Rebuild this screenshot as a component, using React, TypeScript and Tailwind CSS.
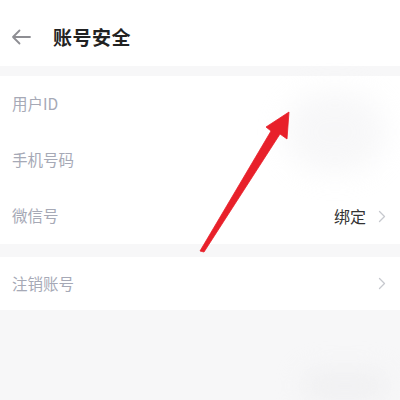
import React from "react";

const font = { fontFamily: '"Noto Sans CJK SC", "Noto Sans", sans-serif' };

function Chevron() {
  return (
    <svg width="8" height="13" viewBox="0 0 8 13" className="shrink-0">
      <path d="M1.5 1.5 L6.5 6.5 L1.5 11.5" fill="none" stroke="#c6c8ce" strokeWidth="1.3" strokeLinecap="round" strokeLinejoin="round" />
    </svg>
  );
}

export default function App() {
  return (
    <div className="relative w-[400px] h-[400px] overflow-hidden bg-[#f7f7f8]" style={font}>
      {/* header */}
      <div className="h-[66px] bg-white flex items-center pl-[10px] pt-[8px]">
        <svg width="22" height="18" viewBox="0 0 22 18">
          <path d="M20 9 H3 M9.5 2.5 L3 9 L9.5 15.5" fill="none" stroke="#8e8e93" strokeWidth="1.8" strokeLinecap="round" strokeLinejoin="round" />
        </svg>
        <span className="ml-[21px] text-[19px] font-bold text-[#222] tracking-[0.5px]">账号安全</span>
      </div>
      <div className="h-[10px]" />
      {/* section 1 */}
      <div className="bg-white">
        <div className="h-[56px] flex items-center pl-[12px] pr-[14px]">
          <span className="text-[15.5px] text-[#a6a9b6]">用户ID</span>
        </div>
        <div className="h-[56px] flex items-center pl-[12px] pr-[14px]">
          <span className="text-[15.5px] text-[#a6a9b6]">手机号码</span>
        </div>
        <div className="h-[56px] flex items-center pl-[12px] pr-[14px]">
          <span className="text-[15.5px] text-[#a6a9b6]">微信号</span>
          <span className="ml-auto text-[16px] text-[#333]">绑定</span>
          <span className="ml-[12px]"><Chevron /></span>
        </div>
      </div>
      <div className="h-[13px]" />
      <div className="bg-white">
        <div className="h-[53px] flex items-center pl-[12px] pr-[14px]">
          <span className="text-[15.5px] text-[#a6a9b6]">注销账号</span>
          <span className="ml-auto"><Chevron /></span>
        </div>
      </div>
      {/* blurred areas */}
      <div className="absolute left-[285px] top-[92px] w-[100px] h-[80px] bg-[#ececef] opacity-40 blur-[14px] rounded-full" />
      <div className="absolute left-[300px] top-[368px] w-[90px] h-[36px] bg-[#ebebed] opacity-50 blur-[12px] rounded-full" />
      {/* red annotation arrow */}
      <svg className="absolute left-0 top-0" width="400" height="400" viewBox="0 0 400 400">
        <path d="M200 251 L271 131 L266 127 L289 112 L287 139 L280 134 L204 252 Z" fill="#e8202a" stroke="#e8202a" strokeWidth="0.8" strokeLinejoin="round" />
      </svg>
    </div>
  );
}
